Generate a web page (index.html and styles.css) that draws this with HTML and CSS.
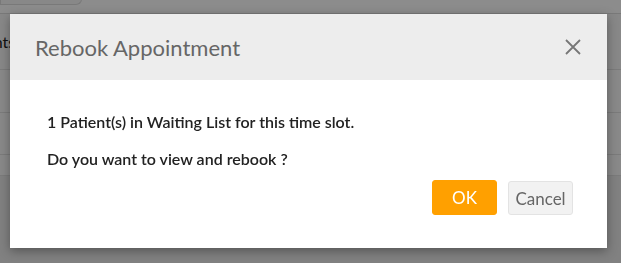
FILE: index.html
```html
<!DOCTYPE html>
<html>
<head>
<meta charset="utf-8">
<link rel="stylesheet" href="styles.css">
</head>
<body>
<div class="page">
  <div class="topbar"><div class="tab"></div></div>
  <div class="row r1"><span class="cell">Appointments</span></div>
  <div class="row r2"></div>
  <div class="row r3"><span class="cell">Waiting List</span></div>
  <div class="row r4"></div>
  <div class="rest"></div>
</div>
<div class="overlay"></div>
<div class="modal">
  <div class="modal-header">
    <span class="modal-title">Rebook Appointment</span>
    <svg class="close" width="16" height="16" viewBox="0 0 16 16"><path d="M1 1L15 15M15 1L1 15" stroke="#777" stroke-width="1.8" fill="none"/></svg>
  </div>
  <div class="modal-body">
    <p class="msg">1 Patient(s) in Waiting List for this time slot.</p>
    <p class="msg">Do you want to view and rebook ?</p>
    <div class="actions">
      <button class="btn ok">OK</button>
      <button class="btn cancel">Cancel</button>
    </div>
  </div>
</div>
</body>
</html>
```
FILE: styles.css
```css
html, body {
  margin: 0;
  padding: 0;
  width: 621px;
  height: 263px;
  overflow: hidden;
  font-family: Lato, "Open Sans", sans-serif;
  background: #f5f5f5;
}
.page {
  display: flex;
  flex-direction: column;
  height: 263px;
}
.topbar {
  height: 14px;
  background: #fff;
  border-bottom: 1px solid #ddd;
  box-sizing: border-box;
}
.tab {
  width: 80px;
  height: 5px;
  margin-top: -1px;
  border: 1px solid #ddd;
  border-top: none;
  border-radius: 0 0 8px 0;
  background: #f7f7f7;
}
.row {
  background: #f9f9f9;
  border-bottom: 1px solid #e0e0e0;
  box-sizing: border-box;
  display: flex;
  align-items: center;
  overflow: hidden;
}
.cell {
  margin-left: -84px;
  font-size: 16px;
  color: #222;
}
.r1 { height: 56px; background: #f7f7f7; }
.r2 { height: 43px; background: #fafafa; }
.r3 { height: 42px; }
.r4 { height: 21px; background: #fafafa; }
.rest { flex: 1; background: #ececec; }
.overlay {
  position: fixed;
  inset: 0;
  background: rgba(0, 0, 0, 0.45);
}
.modal {
  position: absolute;
  left: 10px;
  top: 14px;
  width: 597px;
  height: 234px;
  background: #fff;
  box-shadow: 0 3px 10px rgba(0, 0, 0, 0.35);
  display: flex;
  flex-direction: column;
}
.modal-header {
  height: 66px;
  background: #ededed;
  display: flex;
  align-items: center;
  justify-content: space-between;
  padding: 0 26px 0 25px;
}
.modal-title {
  font-size: 22px;
  color: #666;
  font-weight: 400;
}
.close { display: block; }
.modal-body {
  padding: 32px 34px 0 37px;
  display: flex;
  flex-direction: column;
}
.msg {
  margin: 0 0 17px;
  font-size: 16px;
  font-weight: 600;
  color: #222;
  line-height: 20px;
}
.actions {
  display: flex;
  justify-content: flex-end;
  gap: 11px;
  margin-top: -6px;
}
.btn {
  width: 65px;
  height: 35px;
  border-radius: 3px;
  font-family: Lato, sans-serif;
  font-size: 17px;
  padding: 0;
}
.ok {
  background: #ffa000;
  border: 1px solid #ffa000;
  color: #fff;
}
.cancel {
  background: #f2f2f2;
  border: 1px solid #e3e3e3;
  color: #666;
  height: 34px;
  margin-top: 1px;
}
```
